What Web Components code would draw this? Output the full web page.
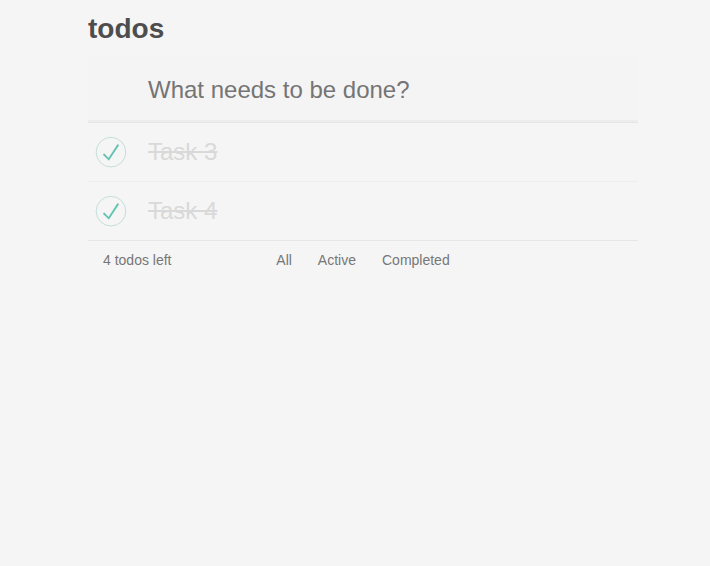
<!DOCTYPE html>
<html lang="en"><head><meta charset="utf-8"><title>todos</title>
<style>body{margin:0;background:#f5f5f5;font:14px/1.4em "Liberation Sans",Arial,sans-serif;color:#4d4d4d}</style></head>
<body><todo-app></todo-app>
<script>
class TodoItem extends HTMLElement{
constructor(){super();this.attachShadow({mode:'open'}).innerHTML=`<style>
:host{display:flex;align-items:center;height:58px;border-bottom:1px solid #ededed;font-size:24px}
:host(:last-of-type){border-bottom:0}
svg{width:40px;height:40px;flex:none;margin-right:20px}
span{line-height:28.8px;color:#d9d9d9;text-decoration:line-through}
</style><svg viewBox="-10 -18 100 135" width="40" height="40"><circle cx="50" cy="50" r="50" fill="none" stroke="#bddad5" stroke-width="3"/><path fill="#5dc2af" stroke="#5dc2af" stroke-width="0.5" transform="translate(0 -1.5)" d="M72 25L42 71 27 56l-4 4 20 20 34-52z"/></svg><span><slot></slot></span>`}}
class TodoHeader extends HTMLElement{
constructor(){super();this.attachShadow({mode:'open'}).innerHTML=`<style>
:host{display:block}
h1{margin:0;font-size:28px;line-height:39px;padding-top:9px;height:48px}
.entry{height:66px;box-sizing:border-box;margin-top:-1px;padding:17px 16px 15px 60px;font-size:24px;line-height:33.6px;color:#757575;background:rgba(0,0,0,.003);box-shadow:inset 0 -2px 1px rgba(0,0,0,.03)}
</style><h1><slot></slot></h1><div class="entry"><slot name="prompt"></slot></div>`}}
class TodoFooter extends HTMLElement{
constructor(){super();this.attachShadow({mode:'open'}).innerHTML=`<style>
:host{display:grid;grid-template-columns:1fr auto 1fr;padding:9px 15px 10px;height:20px;border-top:1px solid #e6e6e6;color:#777;line-height:20px}
nav{display:flex;gap:26px}
</style><slot name="count"></slot><nav><slot></slot></nav>`}}
class TodoApp extends HTMLElement{
constructor(){super();this.attachShadow({mode:'open'}).innerHTML=`<style>
:host{display:block;width:550px;margin:0 auto 0 88px}
main{border-top:1px solid #e6e6e6}
</style><todo-header>todos<span slot="prompt">What needs to be done?</span></todo-header><main><todo-item>Task 3</todo-item><todo-item>Task 4</todo-item></main><todo-footer><span slot="count">4 todos left</span><span>All</span><span>Active</span><span>Completed</span></todo-footer>`}}
customElements.define('todo-item',TodoItem);customElements.define('todo-header',TodoHeader);customElements.define('todo-footer',TodoFooter);customElements.define('todo-app',TodoApp);
</script></body></html>
